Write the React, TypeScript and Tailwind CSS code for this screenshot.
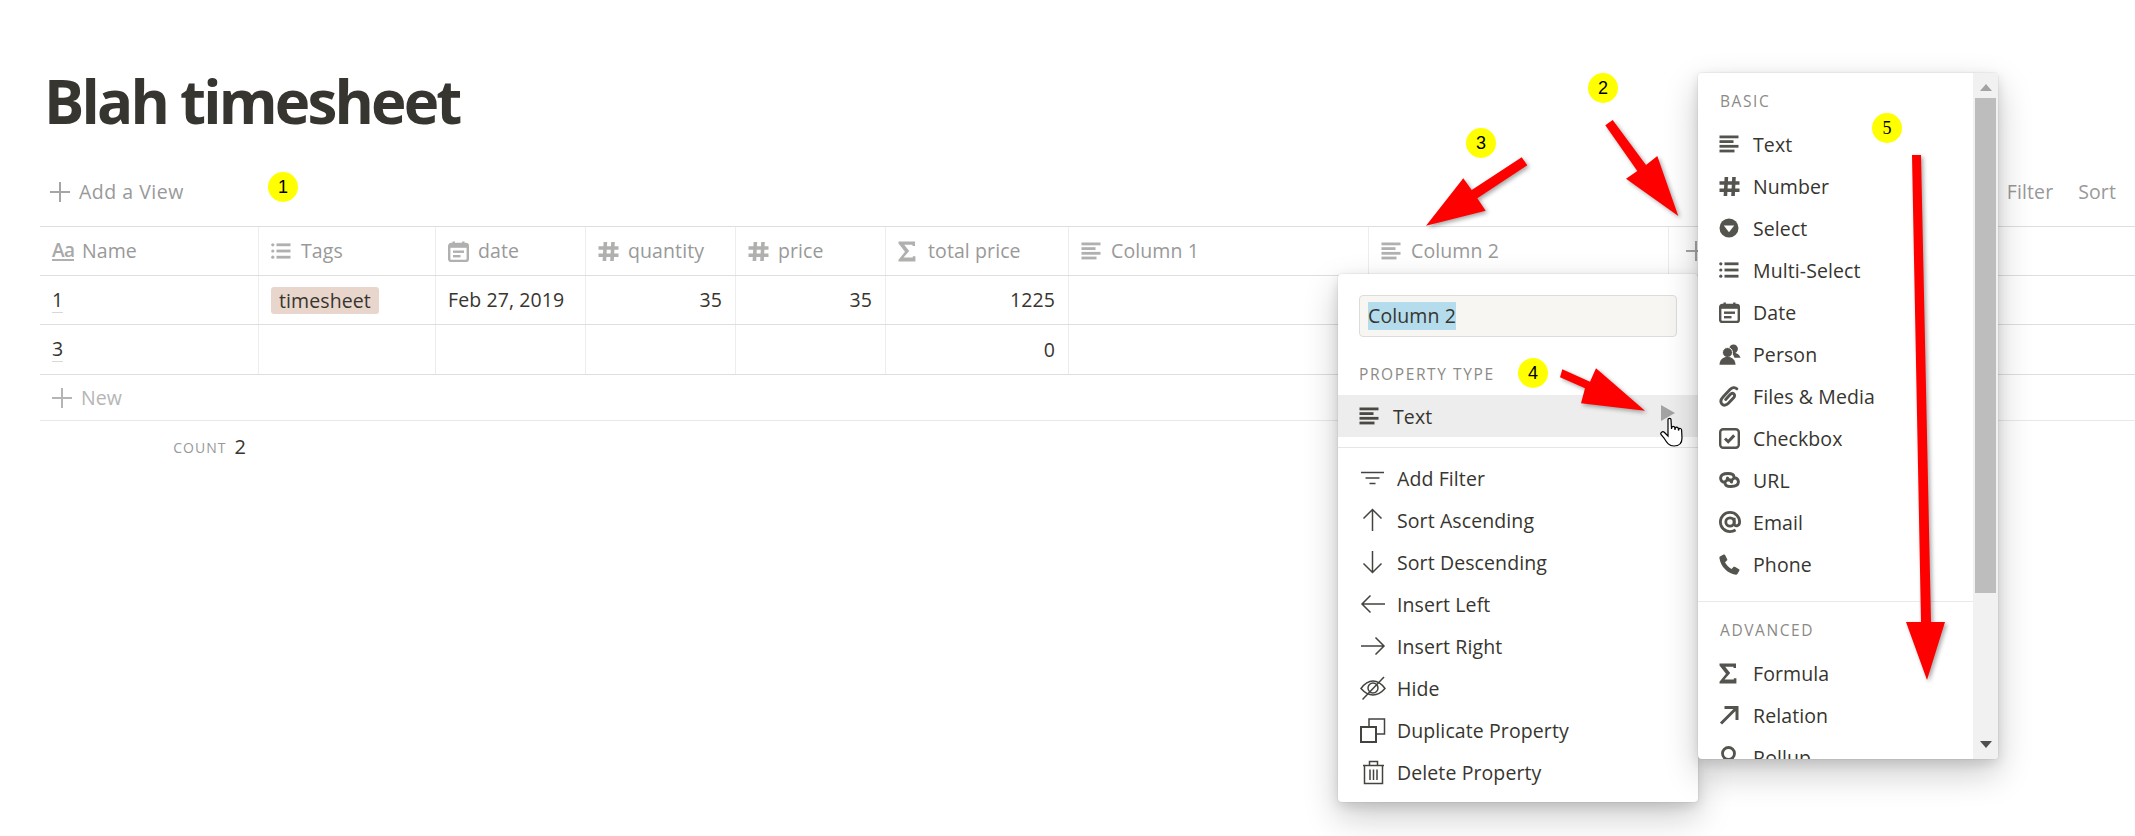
import React from "react";

const Box = ({ w, h, children, c = "#55534e", className = "" }: { w: number; h: number; children: React.ReactNode; c?: string; className?: string }) => (
  <svg width={w} height={h} viewBox={`0 0 ${w} ${h}`} className={className} style={{ color: c, flexShrink: 0 }} fill="none">
    {children}
  </svg>
);

const TextI = ({ c }: { c?: string }) => (
  <Box w={20} h={18} c={c}>
    <rect x="0.5" y="0.5" width="19" height="2.8" fill="currentColor" />
    <rect x="0.5" y="5.2" width="14" height="2.8" fill="currentColor" />
    <rect x="0.5" y="9.9" width="19" height="2.8" fill="currentColor" />
    <rect x="0.5" y="14.6" width="15" height="2.8" fill="currentColor" />
  </Box>
);
const HashI = ({ c }: { c?: string }) => (
  <Box w={21} h={21} c={c}>
    <path d="M7.4 1L6.4 20M15 1L14 20M0.5 7H20.5M0.5 14.2H20.5" stroke="currentColor" strokeWidth="3.6" />
  </Box>
);
const SelectI = ({ c }: { c?: string }) => (
  <Box w={20} h={20} c={c}>
    <circle cx="10" cy="10" r="9.5" fill="currentColor" />
    <path d="M4.8 7.4H15.2L10 14.2Z" fill="#fff" />
  </Box>
);
const ListI = ({ c }: { c?: string }) => (
  <Box w={20} h={18} c={c}>
    <circle cx="1.8" cy="2.8" r="1.6" fill="currentColor" />
    <circle cx="1.8" cy="9" r="1.6" fill="currentColor" />
    <circle cx="1.8" cy="15.2" r="1.6" fill="currentColor" />
    <rect x="5.5" y="1.4" width="14" height="2.8" fill="currentColor" />
    <rect x="5.5" y="7.6" width="14" height="2.8" fill="currentColor" />
    <rect x="5.5" y="13.8" width="14" height="2.8" fill="currentColor" />
  </Box>
);
const DateI = ({ c }: { c?: string }) => (
  <Box w={21} h={21} c={c}>
    <rect x="1.2" y="3" width="18.6" height="17" rx="2" stroke="currentColor" strokeWidth="2.4" />
    <rect x="1.2" y="3" width="18.6" height="3.8" fill="currentColor" />
    <rect x="4.5" y="0.5" width="2.4" height="3" fill="currentColor" />
    <rect x="14.1" y="0.5" width="2.4" height="3" fill="currentColor" />
    <rect x="5" y="9.5" width="11" height="2.4" fill="currentColor" />
    <rect x="5" y="14" width="7.5" height="2.4" fill="currentColor" />
  </Box>
);
const PersonI = () => (
  <Box w={22} h={21}>
    <circle cx="14.5" cy="4.8" r="4.4" fill="currentColor" />
    <path d="M13 8.5C17 8 20.5 10.5 21.5 13.8H15.5Z" fill="currentColor" />
    <circle cx="8.5" cy="8.5" r="5" fill="currentColor" stroke="#fff" strokeWidth="1" />
    <path d="M0.5 20.8C0.5 16.5 3.5 12.8 8.5 12.8C13.5 12.8 16.5 16.5 16.5 20.8Z" fill="currentColor" />
  </Box>
);
const ClipI = () => (
  <Box w={20} h={21}>
    <path
      d="M17.8 2.8C15.8 0.8 13 1.5 11 3.6L4 11C1.6 13.6 1.2 16 2.9 18C4.7 20 7.2 19.4 9.4 17.2L14.6 11.8C16 10.2 15.8 8.6 14.8 7.8C13.8 7 12.4 7.3 11.2 8.6L6.7 13.4"
      stroke="currentColor"
      strokeWidth="2.9"
      strokeLinecap="round"
    />
  </Box>
);
const CheckI = () => (
  <Box w={21} h={21}>
    <rect x="1.2" y="1.2" width="18.6" height="18.6" rx="3" stroke="currentColor" strokeWidth="2.4" />
    <path d="M6 10.5L9.2 13.7L15.2 7.4" stroke="currentColor" strokeWidth="3" />
  </Box>
);
const UrlI = () => (
  <Box w={21} h={16}>
    <path
      d="M6 10.5C3 10 1.5 8.6 1.6 5.8C1.8 2.8 5 1.5 9 1.5C13 1.5 15 3 15 5C15 7 13 8.4 10.5 8.2C8.8 8 8 7 8.5 6M15 5.5C18 6 19.5 7.6 19.4 10.2C19.2 13.2 16 14.5 12 14.5C8 14.5 6 13 6 11C6 9 8 7.6 10.5 7.8C12.2 8 13 9 12.5 10"
      stroke="currentColor"
      strokeWidth="2.9"
      strokeLinecap="round"
    />
  </Box>
);
const AtI = () => (
  <Box w={22} h={22}>
    <circle cx="11" cy="11" r="4.2" stroke="currentColor" strokeWidth="2.8" />
    <path d="M15.2 6.8V12.5C15.2 16 20.6 15.5 20.6 11C20.6 5.5 16.4 1.4 11 1.4C5.6 1.4 1.4 5.7 1.4 11C1.4 16.4 5.7 20.6 11 20.6C13.2 20.6 15 20 16.6 19" stroke="currentColor" strokeWidth="2.8" />
  </Box>
);
const PhoneI = () => (
  <Box w={21} h={21}>
    <path
      d="M1 2.6L4.6 0.6C5.2 0.3 5.8 0.5 6.1 1L8.2 5.2C8.5 5.7 8.3 6.3 7.9 6.6L6 8.2C7 10.5 10 13.8 12.6 15L14.4 13C14.8 12.6 15.4 12.5 15.9 12.8L20 15.2C20.5 15.5 20.6 16.1 20.4 16.6L18.4 20C18 20.6 17.4 20.8 16.8 20.7C8.5 19.5 1.5 12.5 0.4 4C0.3 3.4 0.5 2.9 1 2.6Z"
      fill="currentColor"
    />
  </Box>
);
const SigmaI = ({ c }: { c?: string }) => (
  <Box w={18} h={21} c={c}>
    <path d="M0.5 0.5H17V5H14.5V3.8H6.2L11.2 10L5.5 16.6H14.8V15.2H17.4V20.5H0.5V18.8L7 10.8L0.5 2.6Z" fill="currentColor" />
  </Box>
);
const RelI = () => (
  <Box w={20} h={20}>
    <path d="M2 18.5L17 3.5M5.5 2.5H18V15" stroke="currentColor" strokeWidth="3" />
  </Box>
);
const RollI = () => (
  <Box w={20} h={22}>
    <circle cx="9.5" cy="7.5" r="6" stroke="currentColor" strokeWidth="2.8" />
    <path d="M9.5 13.5V21" stroke="currentColor" strokeWidth="2.8" />
  </Box>
);
const Thin = ({ children }: { children: React.ReactNode }) => (
  <Box w={26} h={26} c="#45433e">
    <g stroke="currentColor" strokeWidth="1.5">{children}</g>
  </Box>
);
const FilterI = () => (
  <Thin>
    <path d="M1 7.5H24M5.5 13H19.5M9.5 18.5H15.5" />
  </Thin>
);
const UpI = () => (
  <Thin>
    <path d="M12.5 24V3M3.5 11.5L12.5 2.5L21.5 11.5" />
  </Thin>
);
const DownI = () => (
  <Thin>
    <path d="M12.5 2V23M3.5 14.5L12.5 23.5L21.5 14.5" />
  </Thin>
);
const LeftI = () => (
  <Thin>
    <path d="M25 13H2M10.5 4.5L2 13L10.5 21.5" />
  </Thin>
);
const RightI = () => (
  <Thin>
    <path d="M1 13H24M15.5 4.5L24 13L15.5 21.5" />
  </Thin>
);
const HideI = () => (
  <Thin>
    <path d="M1 13.5C5 8 9 6 13 6C17 6 21 8 25 13.5C21 18 17 20 13 20C9 20 5 18 1 13.5Z" />
    <circle cx="13" cy="13" r="5" />
    <path d="M2.5 24.5L24 2" />
  </Thin>
);
const DupI = () => (
  <Thin>
    <rect x="1" y="10" width="15" height="15" strokeWidth="2" />
    <path d="M9 10V2H24.5V17H16" />
  </Thin>
);
const TrashI = () => (
  <Thin>
    <path d="M3 6.5H24M4.5 6.5V24.5H22.5V6.5M9.5 6.5V2.5H17.5V6.5M10 10.5V21M13.5 10.5V21M17 10.5V21" />
  </Thin>
);
const Plus = ({ c, s = 20, w = 2 }: { c: string; s?: number; w?: number }) => (
  <Box w={s} h={s} c={c}>
    <path d={`M${s / 2} 0V${s}M0 ${s / 2}H${s}`} stroke="currentColor" strokeWidth={w} />
  </Box>
);

const G = "#b0b0ae";
const cols = [
  {
    w: "w-[219px]",
    name: "Name",
    icon: (
      <span className="flex w-[22px] flex-col text-center text-[19px] leading-[18px] font-semibold tracking-[-0.5px] text-[#a8a8a8]">
        <span className="border-b-2 border-[#b0b0ae]">Aa</span>
      </span>
    ),
  },
  { w: "w-[177px]", name: "Tags", icon: <ListI c={G} /> },
  { w: "w-[150px]", name: "date", icon: <DateI c={G} /> },
  { w: "w-[150px]", name: "quantity", icon: <HashI c={G} /> },
  { w: "w-[150px]", name: "price", icon: <HashI c={G} /> },
  { w: "w-[183px]", name: "total price", icon: <SigmaI c={G} /> },
  { w: "w-[300px]", name: "Column 1", icon: <TextI c={G} /> },
  { w: "w-[300px]", name: "Column 2", icon: <TextI c={G} /> },
];

const cell = "h-full shrink-0 border-r border-[#ededed] flex items-center";
const widths = ["w-[219px]", "w-[177px]", "w-[150px]", "w-[150px]", "w-[150px]", "w-[183px]", "w-[300px]", "w-[300px]"];

const DataRow = ({ h, children }: { h: string; children?: React.ReactNode[] }) => (
  <div className={`flex border-b border-[#dedede] text-[#37352f] ${h}`}>
    {widths.map((w, i) => (
      <div key={i} className={`${cell} ${w} ${i >= 3 && i <= 5 ? "justify-end pr-[13px]" : "pl-[12px]"}`}>
        {children?.[i]}
      </div>
    ))}
  </div>
);

const M1 = ({ icon, t }: { icon: React.ReactNode; t: string }) => (
  <div className="flex h-[42px] items-center gap-[11px] pl-[22px]">
    <span className="flex w-[26px] justify-center">{icon}</span>
    <span className="pt-[2px]">{t}</span>
  </div>
);
const M2 = ({ icon, t }: { icon: React.ReactNode; t: string }) => (
  <div className="flex h-[42px] shrink-0 items-center gap-[12px] pl-[21px]">
    <span className="flex w-[22px] justify-start">{icon}</span>
    <span className="pt-[2px]">{t}</span>
  </div>
);

const Badge = ({ n, pos, serif }: { n: number; pos: string; serif?: boolean }) => (
  <div className={`absolute flex h-[30px] w-[30px] items-center justify-center rounded-full bg-[#ffff00] text-[18px] tracking-normal text-black ${serif ? "font-['Liberation_Serif']" : "font-['Liberation_Sans']"} ${pos}`}>
    {n}
  </div>
);

const menuShadow = "shadow-[0_0_0_1px_rgba(15,15,15,0.04),0_4px_12px_rgba(15,15,15,0.12),0_14px_34px_rgba(15,15,15,0.22)]";
const label = "text-[15.5px] leading-[22px] font-medium tracking-[1.6px] text-[#8b8a86]";

export default function App() {
  return (
    <div className="relative h-[836px] w-[2135px] overflow-hidden bg-white font-['Open_Sans','Noto_Sans',sans-serif] text-[19.5px] tracking-[0.1px] text-[#37352f]">
      <div className="flex flex-col pl-[40px]">
        <h1 className="pt-[60px] pl-[4px] text-[60px] leading-[82px] font-bold tracking-[-2.8px] text-[#37352f]">Blah timesheet</h1>
        <div className="mt-[16px] flex h-[68px] items-center justify-between pr-[19px] text-[#999]">
          <div className="flex items-center gap-[9px] pl-[10px]">
            <Plus c="#a5a5a5" />
            <span className="tracking-[0.5px]">Add a View</span>
          </div>
          <div className="flex items-center gap-[25px]">
            <span>Filter</span>
            <span>Sort</span>
          </div>
        </div>
        <div className="flex h-[50px] border-y border-[#dedede] text-[#999]">
          {cols.map((c) => (
            <div key={c.name} className={`${cell} ${c.w} gap-[8px] pl-[12px]`}>
              <span className="flex w-[22px] justify-start">{c.icon}</span>
              <span>{c.name}</span>
            </div>
          ))}
          <div className="flex items-center pl-[17px]">
            <Plus c="#a5a5a5" />
          </div>
        </div>
        <DataRow h="h-[49px]">
          {[
            <span className="border-b border-[#d8d8d8] leading-[24px]">1</span>,
            <span className="rounded-[3px] bg-[#e8d6cd] px-[8px] leading-[27px]">timesheet</span>,
            <span>Feb 27, 2019</span>,
            <span>35</span>,
            <span>35</span>,
            <span>1225</span>,
          ]}
        </DataRow>
        <DataRow h="h-[50px]">
          {[<span className="border-b border-[#d8d8d8] leading-[24px]">3</span>, null, null, null, null, <span>0</span>]}
        </DataRow>
        <div className="flex h-[46px] items-center gap-[9px] border-b border-[#e9e9e9] pl-[12px] text-[#b5b5b5]">
          <Plus c="#b5b5b5" />
          <span>New</span>
        </div>
        <div className="flex w-[218px] items-center justify-end gap-[8px] pt-[13px] pr-[12px]">
          <span className="text-[14px] tracking-[1px] text-[#999]">COUNT</span>
          <span className="text-[20px] leading-[26px]">2</span>
        </div>
      </div>

      {/* property menu */}
      <div className={`absolute top-[274px] left-[1338px] w-[360px] rounded-[4px] bg-white pt-[21px] pb-[9px] ${menuShadow}`}>
        <div className="mx-[21px] flex h-[42px] items-center rounded-[4px] border border-[#dcdcda] bg-[#f7f6f3] px-[8px]">
          <span className="bg-[#b4dcec] leading-[28px] text-[#37352f]">Column 2</span>
        </div>
        <div className={`mt-[26px] pl-[21px] ${label}`}>PROPERTY TYPE</div>
        <div className="mt-[10px] flex h-[42px] items-center justify-between bg-[#ededed] pr-[23px] pl-[21px]">
          <span className="flex items-center gap-[14px]">
            <TextI c="#4a4843" />
            <span className="pt-[2px]">Text</span>
          </span>
          <svg width="14" height="16" viewBox="0 0 14 16" className="mb-[6px]">
            <path d="M0 0L14 8L0 16Z" fill="#a3a3a1" />
          </svg>
        </div>
        <div className="mt-[10px] mb-[9px] h-px bg-[#e6e6e6]" />
        <M1 icon={<FilterI />} t="Add Filter" />
        <M1 icon={<UpI />} t="Sort Ascending" />
        <M1 icon={<DownI />} t="Sort Descending" />
        <M1 icon={<LeftI />} t="Insert Left" />
        <M1 icon={<RightI />} t="Insert Right" />
        <M1 icon={<HideI />} t="Hide" />
        <M1 icon={<DupI />} t="Duplicate Property" />
        <M1 icon={<TrashI />} t="Delete Property" />
      </div>

      {/* type menu */}
      <div className={`absolute top-[73px] left-[1698px] flex h-[686px] w-[300px] overflow-hidden rounded-[4px] bg-white ${menuShadow}`}>
        <div className="flex min-w-0 flex-1 flex-col overflow-hidden">
          <div className={`mt-[17px] pl-[22px] ${label}`}>BASIC</div>
          <div className="mt-[11px] flex flex-col">
            <M2 icon={<TextI />} t="Text" />
            <M2 icon={<HashI />} t="Number" />
            <M2 icon={<SelectI />} t="Select" />
            <M2 icon={<ListI />} t="Multi-Select" />
            <M2 icon={<DateI />} t="Date" />
            <M2 icon={<PersonI />} t="Person" />
            <M2 icon={<ClipI />} t="Files & Media" />
            <M2 icon={<CheckI />} t="Checkbox" />
            <M2 icon={<UrlI />} t="URL" />
            <M2 icon={<AtI />} t="Email" />
            <M2 icon={<PhoneI />} t="Phone" />
          </div>
          <div className="mt-[16px] h-px shrink-0 bg-[#e9e9e9]" />
          <div className={`mt-[17px] pl-[22px] ${label}`}>ADVANCED</div>
          <div className="mt-[11px] flex flex-col">
            <M2 icon={<SigmaI />} t="Formula" />
            <M2 icon={<RelI />} t="Relation" />
            <M2 icon={<RollI />} t="Rollup" />
          </div>
        </div>
        <div className="flex w-[25px] shrink-0 flex-col items-center bg-[#f1f1f1] px-[2px]">
          <div className="flex h-[25px] w-full shrink-0 items-center justify-center pt-[3px]">
            <svg width="12" height="7" viewBox="0 0 12 7">
              <path d="M6 0L12 7H0Z" fill="#a3a3a3" />
            </svg>
          </div>
          <div className="h-[495px] w-full shrink-0 bg-[#bdbdbd]" />
          <div className="flex-1" />
          <div className="flex h-[26px] w-full shrink-0 items-center justify-center pb-[3px]">
            <svg width="12" height="7" viewBox="0 0 12 7">
              <path d="M0 0H12L6 7Z" fill="#505050" />
            </svg>
          </div>
        </div>
      </div>

      {/* annotations */}
      <svg width="2135" height="836" className="pointer-events-none absolute top-0 left-0 drop-shadow-[2px_2px_2px_rgba(0,0,0,0.35)]">
        <polygon fill="#ff0000" points="1605.3,125.3 1612.7,120 1646,165 1657.3,156 1678.3,216 1626,178.7 1637.3,171" />
        <polygon fill="#ff0000" points="1521.7,157.3 1527.3,165.3 1477.3,198.3 1485.7,210.7 1426,225.7 1463.3,178.3 1471.7,190" />
        <polygon fill="#ff0000" points="1562.3,369.3 1560,377.3 1585,388.3 1581,403.3 1645,410.7 1596,368.3 1590,381.7" />
        <polygon fill="#ff0000" points="1912,155 1921,155 1931,622 1945,622 1927,680 1906,622 1921,622" />
      </svg>
      <svg width="28" height="32" viewBox="0 0 28 32" className="pointer-events-none absolute top-[417px] left-[1660px]">
        <path
          d="M8 2.5C8 1 11 1 11 2.5L11.5 12L11.8 10.5C12 9 14.5 9 14.7 10.5L15 13L15.3 11C15.6 9.7 18 9.7 18.2 11.2L18.5 13.5L18.9 12.2C19.3 11 21.5 11.3 21.6 13L22 21C22 26 19 29 14 29C9 29 7 26 4 21L1 17.5C0 16 2.5 13.5 4.5 15.5L8 19Z"
          fill="#fff"
          stroke="#000"
          strokeWidth="1.2"
        />
      </svg>
      <Badge n={1} pos="top-[172px] left-[268px]" />
      <Badge n={2} pos="top-[73px] left-[1588px]" />
      <Badge n={3} pos="top-[128px] left-[1466px]" />
      <Badge n={4} pos="top-[358px] left-[1518px]" />
      <Badge n={5} serif pos="top-[113px] left-[1872px]" />
    </div>
  );
}
